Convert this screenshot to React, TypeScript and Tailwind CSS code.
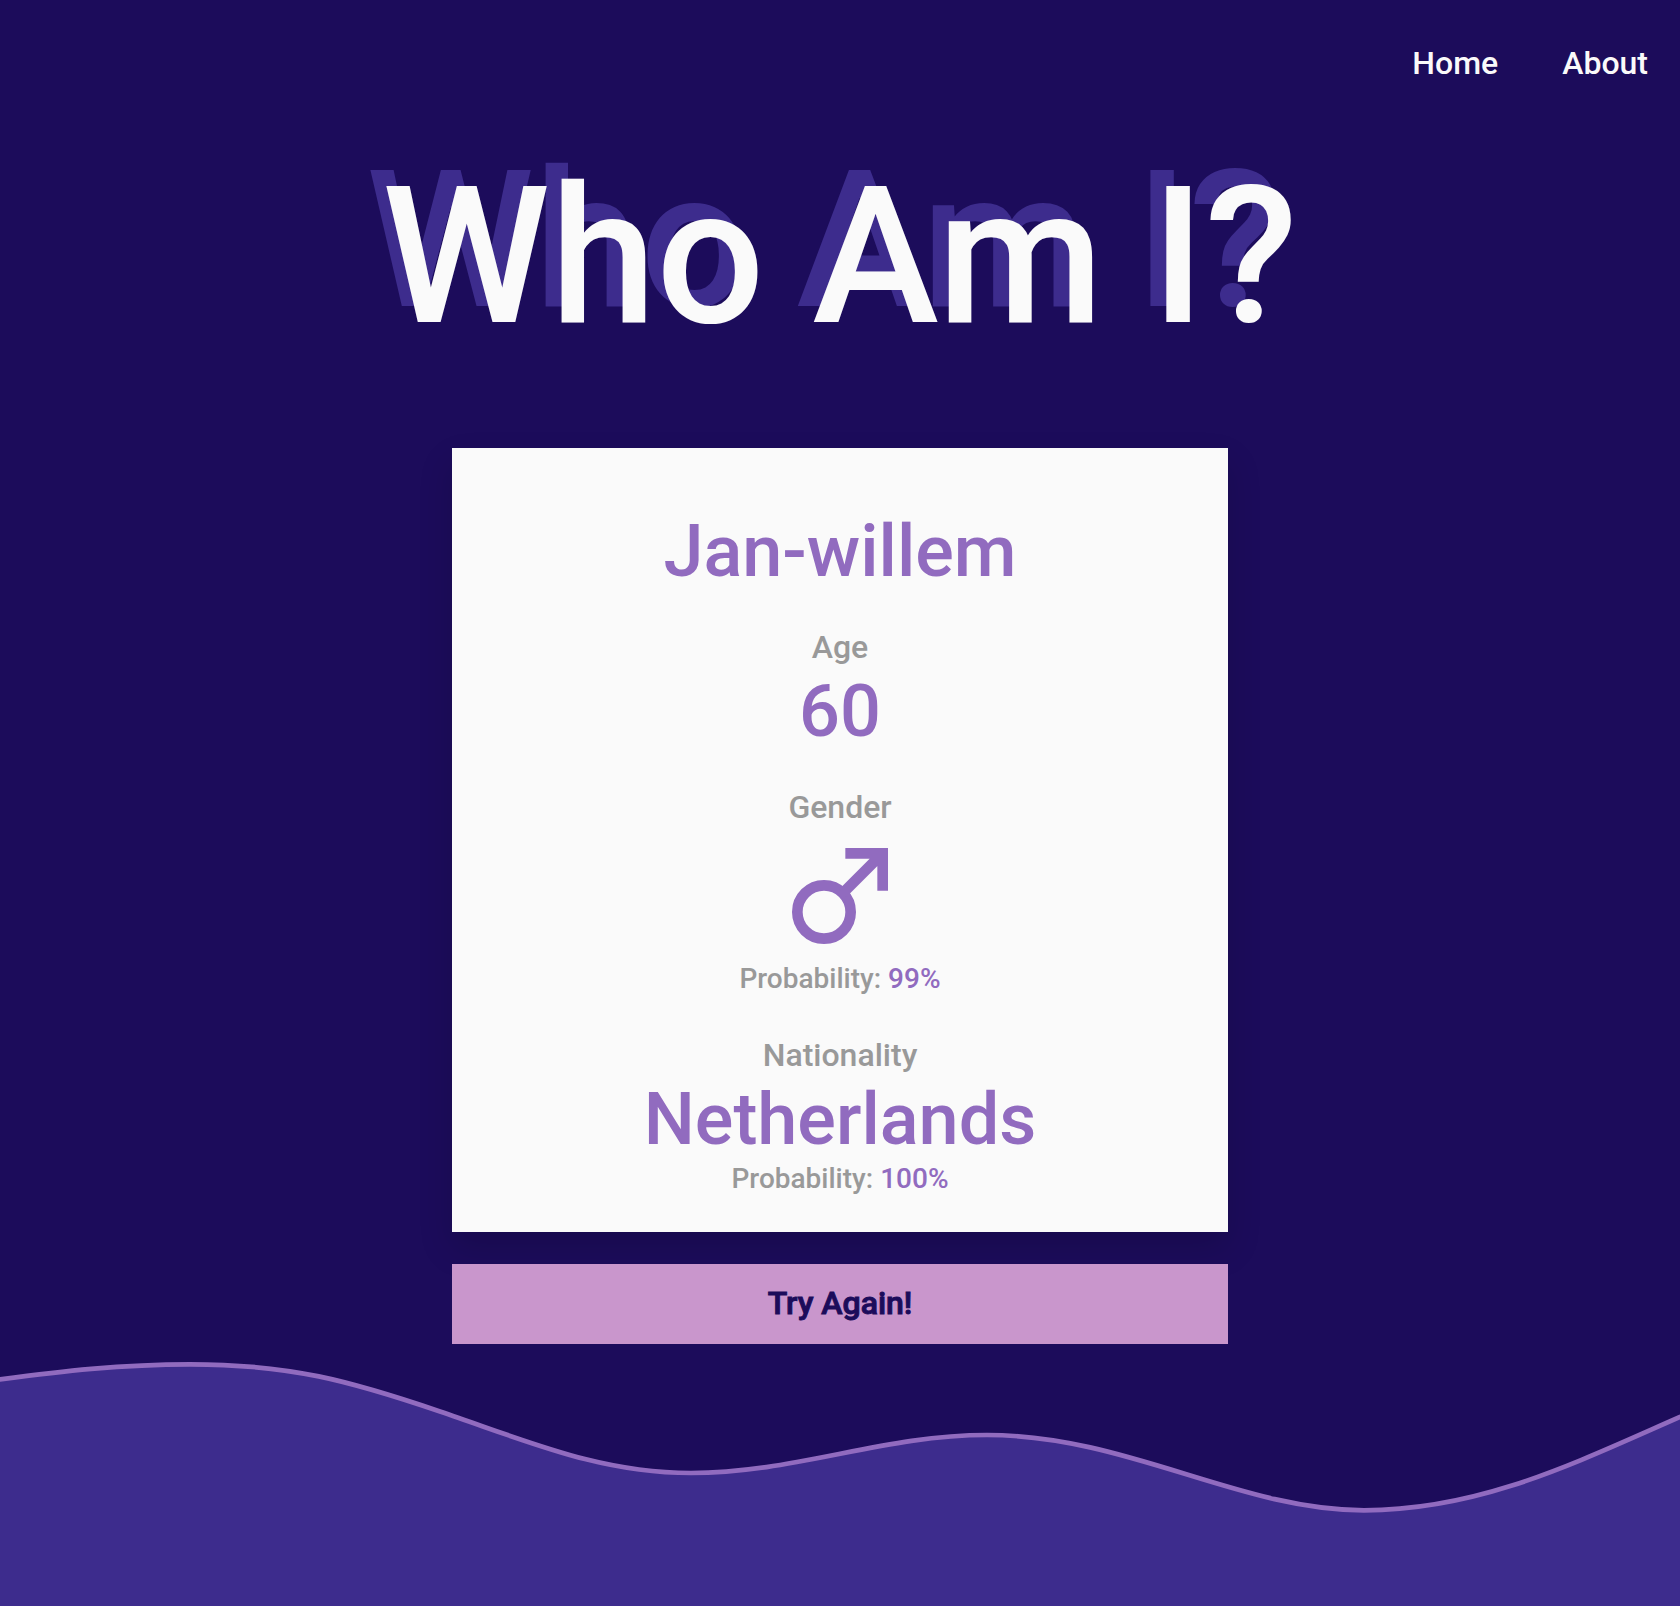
import type { ReactNode } from 'react'

function Label({ children }: { children: ReactNode }) {
  return <h3 className="mt-8 pb-[2px] text-[32px] leading-[46px] text-[#999999]">{children}</h3>
}

function Value({ children }: { children: ReactNode }) {
  return <p className="text-[72px] leading-[80px]">{children}</p>
}

function Probability({ value }: { value: number }) {
  return (
    <p className="pb-[2px] text-[28px] leading-[38px] text-[#999999]">
      Probability: <span className="text-[#916bbf]">{value}%</span>
    </p>
  )
}

export default function App() {
  return (
    <div className="flex min-h-screen flex-col bg-[#1c0c5b] font-[Roboto,sans-serif] font-medium text-[#fafafa]">
      <nav className="flex justify-end gap-16 px-8 pt-10 text-[32px] leading-[46px]">
        <a href="#home">Home</a>
        <a href="#about">About</a>
      </nav>
      <header className="px-4 pt-[42px] text-center">
        <h1 className="text-[191px] leading-[258px] [text-shadow:-16px_-16px_0_#3d2c8d]">Who Am I?</h1>
      </header>
      <main className="mx-auto mt-[62px] flex w-full max-w-[776px] flex-col gap-8">
        <section className="flex flex-col items-center bg-[#fafafa] px-8 pt-16 pb-8 text-center text-[#916bbf] shadow-[0_16px_32px_rgba(0,0,0,0.15)]">
          <h2 className="text-[72px] leading-[80px]">Jan-willem</h2>
          <Label>Age</Label>
          <Value>60</Value>
          <Label>Gender</Label>
          <svg className="size-32" viewBox="0 0 24 24" fill="none" stroke="currentColor" strokeWidth="2" role="img" aria-label="Male">
            <circle cx="9" cy="15" r="5" />
            <path d="M12.5 11.5L20 4M13 4H20V11" />
          </svg>
          <Probability value={99} />
          <Label>Nationality</Label>
          <Value>Netherlands</Value>
          <Probability value={100} />
        </section>
        <button type="button" className="h-20 bg-[#c996cc] pb-[2px] text-[32px] text-[#1c0c5b] [-webkit-text-stroke:1px_#1c0c5b]">
          Try Again!
        </button>
      </main>
      <svg className="mt-4 block h-[246px] w-full" viewBox="0 0 1680 246" preserveAspectRatio="none" aria-hidden="true">
        <path
          d="M-8 20.3L0 19.3C60 11.5 120 4.3 190 4.3C290 4.3 350 20.9 440 51.5C530 82 600 113 691 113C795 113 883 75 987 75C1127 75 1239 150.3 1364 150.3C1480 150.3 1575 103 1680 57L1690 52.6V256H-8Z"
          fill="#3d2c8d"
          stroke="#916bbf"
          strokeWidth="4.7"
        />
      </svg>
    </div>
  )
}
